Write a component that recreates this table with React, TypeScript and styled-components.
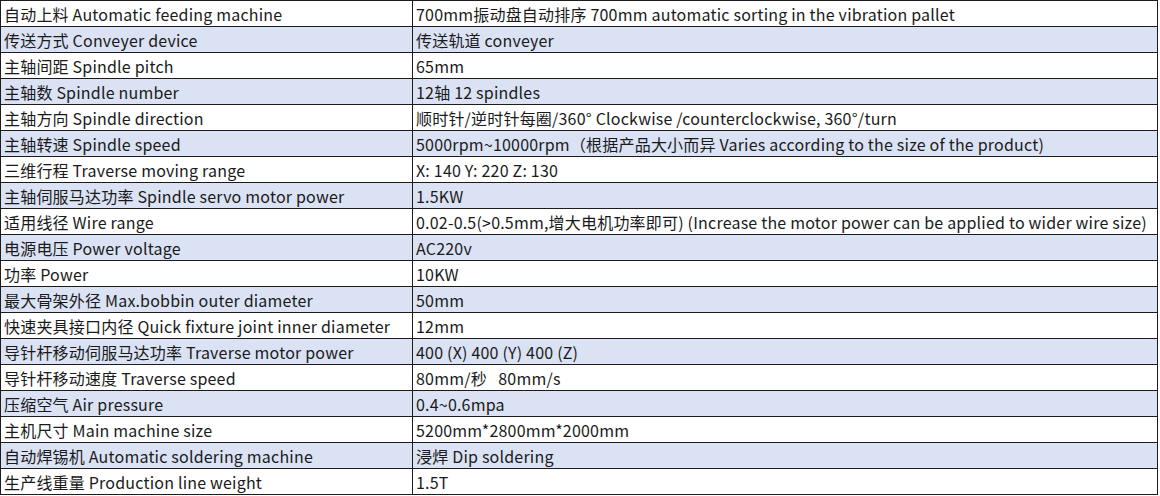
import styled, { createGlobalStyle } from "styled-components";

const GlobalStyle = createGlobalStyle`
  body {
    margin: 0;
    background: #ffffff;
    font-family: "Noto Sans CJK SC", "Noto Sans", sans-serif;
  }
`;

const Table = styled.table`
  width: 1158px;
  border-collapse: collapse;
  table-layout: fixed;
  color: #1a1a1a;
  font-size: 16px;
  letter-spacing: 0.2px;
`;

const Row = styled.tr<{ $shaded: boolean }>`
  height: 26px;
  background: ${(p) => (p.$shaded ? "#dae2f4" : "#ffffff")};
`;

const Cell = styled.td`
  border: 1px solid #1c1c1c;
  padding: 0 0 0 3px;
  height: 25px;
  box-sizing: border-box;
  line-height: 20px;
  white-space: pre;
  overflow: hidden;
  vertical-align: middle;
`;

const LabelCell = styled(Cell)`
  width: 412px;
`;

const specs: [string, string][] = [
  ["自动上料 Automatic feeding machine", "700mm振动盘自动排序 700mm automatic sorting in the vibration pallet"],
  ["传送方式 Conveyer device", "传送轨道 conveyer"],
  ["主轴间距 Spindle pitch", "65mm"],
  ["主轴数 Spindle number", "12轴 12 spindles"],
  ["主轴方向 Spindle direction", "顺时针/逆时针每圈/360° Clockwise /counterclockwise, 360°/turn"],
  ["主轴转速 Spindle speed", "5000rpm~10000rpm（根据产品大小而异 Varies according to the size of the product)"],
  ["三维行程 Traverse moving range", "X: 140 Y: 220 Z: 130"],
  ["主轴伺服马达功率 Spindle servo motor power", "1.5KW"],
  ["适用线径 Wire range", "0.02-0.5(>0.5mm,增大电机功率即可) (Increase the motor power can be applied to wider wire size)"],
  ["电源电压 Power voltage", "AC220v"],
  ["功率 Power", "10KW"],
  ["最大骨架外径 Max.bobbin outer diameter", "50mm"],
  ["快速夹具接口内径 Quick fixture joint inner diameter", "12mm"],
  ["导针杆移动伺服马达功率 Traverse motor power", "400 (X) 400 (Y) 400 (Z)"],
  ["导针杆移动速度 Traverse speed", "80mm/秒   80mm/s"],
  ["压缩空气 Air pressure", "0.4~0.6mpa"],
  ["主机尺寸 Main machine size", "5200mm*2800mm*2000mm"],
  ["自动焊锡机 Automatic soldering machine", "浸焊 Dip soldering"],
  ["生产线重量 Production line weight", "1.5T"],
];

export default function App() {
  return (
    <>
      <GlobalStyle />
      <Table>
        <tbody>
          {specs.map(([label, value], i) => (
            <Row key={label} $shaded={i % 2 === 1}>
              <LabelCell>{label}</LabelCell>
              <Cell>{value}</Cell>
            </Row>
          ))}
        </tbody>
      </Table>
    </>
  );
}
